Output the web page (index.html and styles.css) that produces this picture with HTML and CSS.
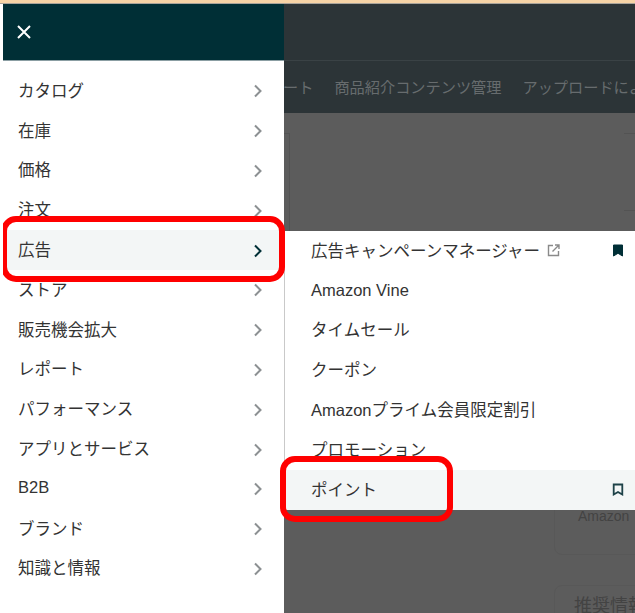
FILE: index.html
```html
<!DOCTYPE html>
<html lang="ja">
<head>
<meta charset="utf-8">
<title>広告メニュー</title>
<link rel="stylesheet" href="styles.css">
</head>
<body>
<div class="strip"></div>
<div class="page">
  <header class="topbar"></header>
  <nav class="navbar">
    <span>ート</span>
    <span>商品紹介コンテンツ管理</span>
    <span>アップロードによる商品登録</span>
  </nav>
  <main class="content">
    <div class="row-cards">
      <div class="card-left"></div>
      <div class="card-right"></div>
    </div>
    <div class="lower">
      <div class="card-amazon">Amazon</div>
      <div class="card-reco">推奨情報</div>
    </div>
  </main>

  <aside class="menu">
    <div class="menu-head">
      <svg class="close" width="16" height="16" viewBox="0 0 16 16"><path d="M2 2 14 14M14 2 2 14"/></svg>
    </div>
    <ul class="list">
      <li class="item">カタログ<svg class="chev" viewBox="0 0 10 14"><path d="M2 1.5 7.5 7 2 12.5"/></svg></li>
      <li class="item">在庫<svg class="chev" viewBox="0 0 10 14"><path d="M2 1.5 7.5 7 2 12.5"/></svg></li>
      <li class="item">価格<svg class="chev" viewBox="0 0 10 14"><path d="M2 1.5 7.5 7 2 12.5"/></svg></li>
      <li class="item">注文<svg class="chev" viewBox="0 0 10 14"><path d="M2 1.5 7.5 7 2 12.5"/></svg></li>
      <li class="item active">広告<svg class="chev" viewBox="0 0 10 14"><path d="M2 1.5 7.5 7 2 12.5"/></svg></li>
      <li class="item">ストア<svg class="chev" viewBox="0 0 10 14"><path d="M2 1.5 7.5 7 2 12.5"/></svg></li>
      <li class="item">販売機会拡大<svg class="chev" viewBox="0 0 10 14"><path d="M2 1.5 7.5 7 2 12.5"/></svg></li>
      <li class="item">レポート<svg class="chev" viewBox="0 0 10 14"><path d="M2 1.5 7.5 7 2 12.5"/></svg></li>
      <li class="item">パフォーマンス<svg class="chev" viewBox="0 0 10 14"><path d="M2 1.5 7.5 7 2 12.5"/></svg></li>
      <li class="item">アプリとサービス<svg class="chev" viewBox="0 0 10 14"><path d="M2 1.5 7.5 7 2 12.5"/></svg></li>
      <li class="item">B2B<svg class="chev" viewBox="0 0 10 14"><path d="M2 1.5 7.5 7 2 12.5"/></svg></li>
      <li class="item">ブランド<svg class="chev" viewBox="0 0 10 14"><path d="M2 1.5 7.5 7 2 12.5"/></svg></li>
      <li class="item">知識と情報<svg class="chev" viewBox="0 0 10 14"><path d="M2 1.5 7.5 7 2 12.5"/></svg></li>
    </ul>
  </aside>

  <aside class="submenu">
    <ul class="sublist">
      <li class="subitem">
        <span class="sublabel">広告キャンペーンマネージャー
          <svg class="ext" width="13" height="13" viewBox="0 0 13 13"><path d="M6 1.500H1.500v10h10V7M5.500 7.500 11.500 1.500M8 1h4v4"/></svg>
        </span>
        <svg class="mark filled" width="12" height="13" viewBox="0 0 12 13"><path d="M1.500 1h9v11L6 9.300 1.500 12Z"/></svg>
      </li>
      <li class="subitem latin">Amazon Vine</li>
      <li class="subitem">タイムセール</li>
      <li class="subitem">クーポン</li>
      <li class="subitem">Amazonプライム会員限定割引</li>
      <li class="subitem">プロモーション</li>
      <li class="subitem active">
        <span class="sublabel">ポイント</span>
        <svg class="mark" width="12" height="13" viewBox="0 0 12 13"><path d="M1.700 1.500h8.600v10L6 9 1.700 11.500Z"/></svg>
      </li>
    </ul>
  </aside>

  <div class="callout callout-ad"></div>
  <div class="callout callout-point"></div>
</div>
</body>
</html>
```
FILE: styles.css
```css
* { box-sizing: border-box; }
html, body { margin: 0; padding: 0; height: 100%; overflow: hidden; background: #fff; }
body {
  font-family: "Liberation Sans", "Noto Sans CJK JP", sans-serif;
  font-size: 16.5px;
  color: #333;
}
ul { list-style: none; margin: 0; padding: 0; }

.strip { height: 4px; background: #f6d3a6; border-bottom: 1px solid #a9a39a; }

.page {
  position: relative;
  height: 609px;
  margin-left: 3px;
  display: flex;
  flex-direction: column;
  overflow: hidden;
  background: #5c5c5c;
}
.topbar { height: 57px; flex: none; background: #2c3437; border-bottom: 1px solid #3a4245; }
.navbar {
  height: 52px;
  flex: none;
  display: flex;
  align-items: center;
  gap: 21px;
  padding-left: 280px;
  padding-bottom: 3px;
  background: #2c3437;
  color: #676c6e;
  font-size: 15.2px;
  white-space: nowrap;
  overflow: hidden;
}
.navbar span { flex: none; }

.content { flex: 1; display: flex; flex-direction: column; color: #434343; padding-top: 20px; }
.row-cards { display: flex; justify-content: space-between; height: 98px; flex: none; }
.card-left { width: 287px; height: 98px; border-top: 1px solid #535353; border-right: 1px solid #535353; }
.card-right { width: 11px; height: 78px; border-top: 1px solid #535353; border-bottom: 1px solid #535353; }

.lower { margin-left: 551px; display: flex; flex-direction: column; }
.card-amazon {
  height: 110px;
  margin-top: 214px;
  margin-right: -20px;
  padding: 60px 0 0 23px;
  border: 1px solid #585858;
  border-radius: 8px;
  font-size: 14px;
  line-height: 20px;
  white-space: nowrap;
}
.card-reco {
  height: 60px;
  margin-top: 30px;
  margin-right: -20px;
  padding: 8px 0 0 19px;
  border: 1px solid #585858;
  border-radius: 8px;
  font-size: 18px;
  line-height: 24px;
  white-space: nowrap;
}

.menu {
  position: absolute;
  left: 0;
  top: 0;
  bottom: 0;
  width: 281px;
  display: flex;
  flex-direction: column;
  background: #fff;
}
.menu-head {
  height: 57px;
  flex: none;
  display: flex;
  align-items: center;
  padding-left: 13px;
  background: #002f36;
  border-bottom: 1px solid #8b9ea3;
}
.close { fill: none; stroke: #fff; stroke-width: 2; }
.list { padding-top: 10px; }
.item {
  height: 39.8px;
  display: flex;
  align-items: center;
  justify-content: space-between;
  padding: 0 21px 2px 15px;
  white-space: nowrap;
}
.item.active { background: #f3f6f6; margin-right: 4px; padding-right: 17px; }
.chev { width: 10px; height: 14px; margin-top: 3px; fill: none; stroke: #8c9092; stroke-width: 2; }
.active .chev { stroke: #002f36; margin-top: 3px; }

.submenu {
  position: absolute;
  left: 281px;
  right: 0;
  top: 227px;
  height: 279px;
  background: #fff;
  border-left: 1px solid #c9c9c9;
}
.subitem {
  height: 39.8px;
  display: flex;
  align-items: center;
  justify-content: space-between;
  padding: 0 11px 2px 26px;
  white-space: nowrap;
  color: #333;
}
.subitem.latin { padding-bottom: 0; }
.subitem.active { background: #f3f6f6; }
.sublabel { display: flex; align-items: center; gap: 7px; }
.ext { margin-top: 1px; fill: none; stroke: #8a8a8a; stroke-width: 1.400; }
.mark { margin-top: 2px; fill: none; stroke: #1d4248; stroke-width: 1.800; }
.mark.filled { fill: #002f36; stroke: #002f36; stroke-width: 1; }

.callout {
  position: absolute;
  border: 6px solid #f00;
  border-radius: 15px;
  pointer-events: none;
}
.callout-ad { left: -2px; top: 212px; width: 284px; height: 66px; }
.callout-point { left: 277px; top: 452px; width: 173px; height: 66px; }
```
